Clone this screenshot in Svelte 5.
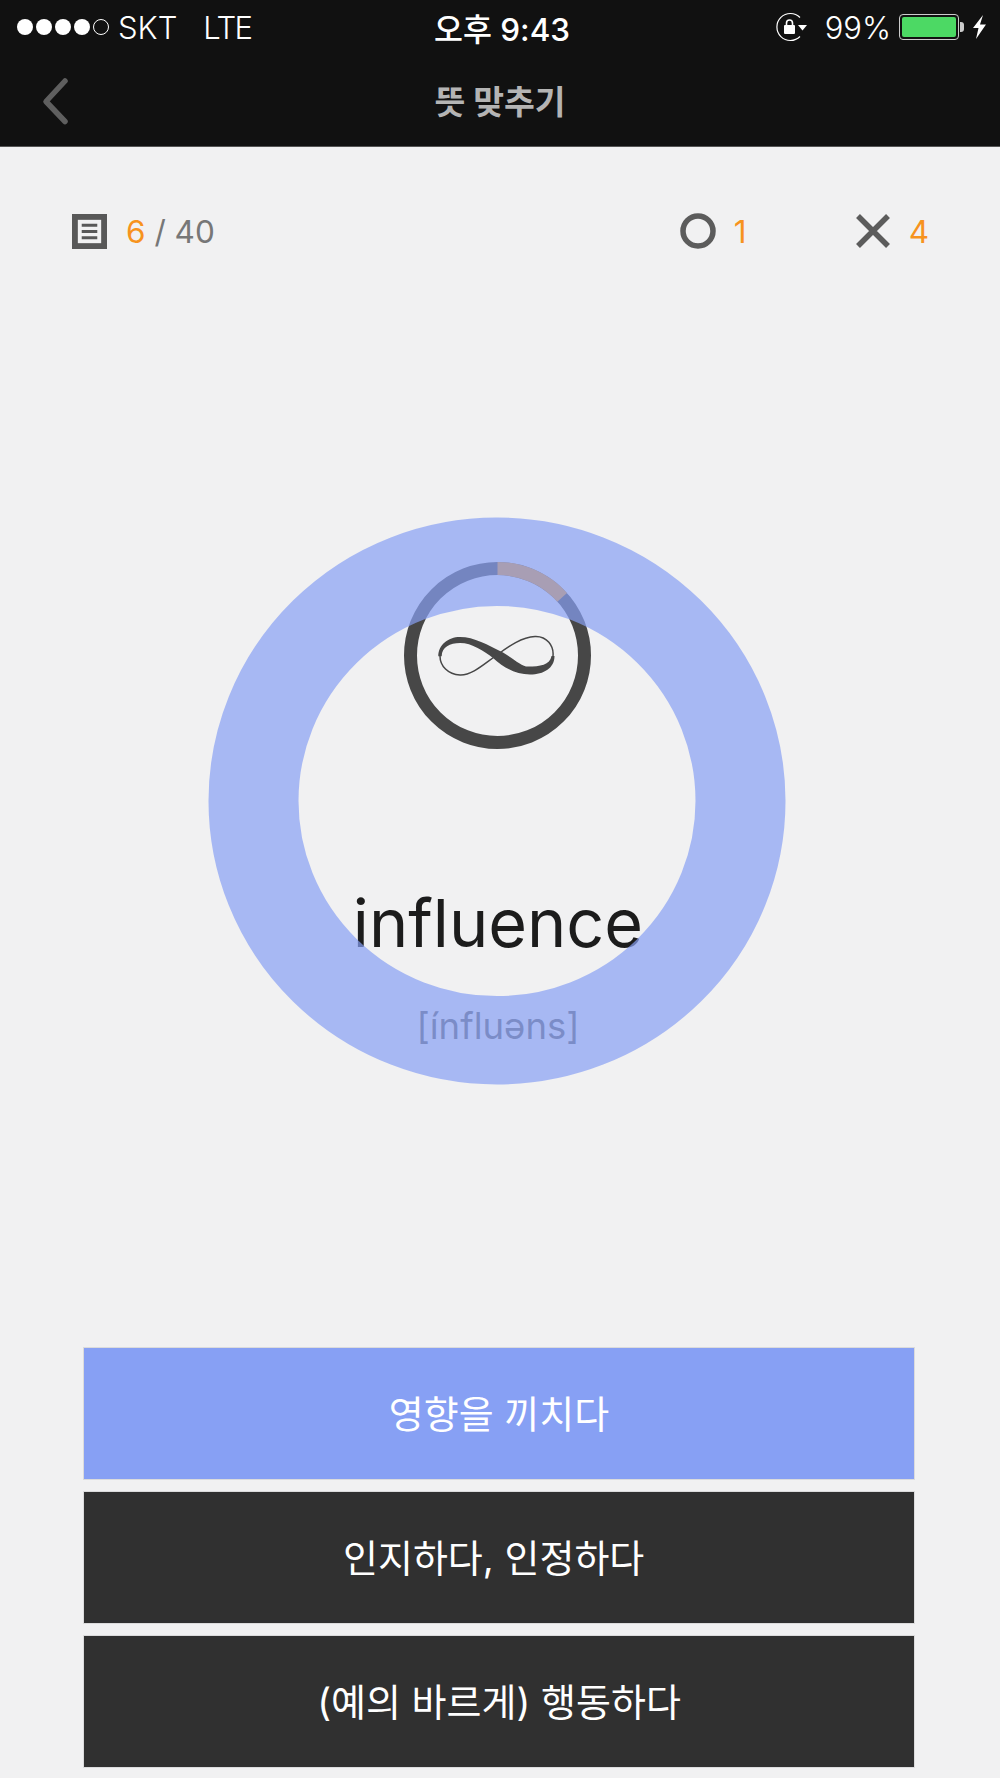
<script>
  const answers = [
    { label: '영향을 끼치다', correct: true },
    { label: '인지하다, 인정하다\u00a0', correct: false },
    { label: '(예의 바르게) 행동하다', correct: false }
  ];
  // orange part of the timer ring, from 12 o'clock
  const endAngle = (48 * Math.PI) / 180;
  const arcEnd = `${93.5 + 87 * Math.sin(endAngle)} ${93.5 - 87 * Math.cos(endAngle)}`;
</script>

<div class="screen">
  <header>
    <div class="status">
      <div class="carrier">
        <span class="dots">
          {#each [1, 2, 3, 4] as d}<i class="dot"></i>{/each}<i class="dot empty"></i>
        </span>
        <span class="name">SKT</span>
        <span class="name lte">LTE</span>
      </div>
      <div class="clock">오후 9:43</div>
      <div class="right">
        <svg class="lock" width="32" height="30" viewBox="0 0 32 30">
          <path d="M25 5.500A13.500 13.500 0 1 0 25 24.500" fill="none" stroke="#fff" stroke-width="1.200" />
          <path d="M23 13h9l-4.500 5.500z" fill="#fff" />
          <rect x="9" y="13" width="11" height="9" rx="1" fill="#fff" />
          <path d="M11.500 13V11a3 3 0 0 1 6 0V13" fill="none" stroke="#fff" stroke-width="1.600" />
        </svg>
        <span class="pct">99%</span>
        <span class="battery"><span class="fill"></span></span>
        <span class="nub"></span>
        <svg class="bolt" width="15" height="26" viewBox="0 0 15 26">
          <path d="M11 1 1 14h5.500L4 25 14 10.500H8z" fill="#fff" />
        </svg>
      </div>
    </div>
    <div class="nav">
      <svg class="back" width="30" height="50" viewBox="0 0 30 50">
        <path d="M24 4 5 24.500l19 20" fill="none" stroke="#5f5f5f" stroke-width="5.500" stroke-linecap="round" stroke-linejoin="round" />
      </svg>
      <h1>뜻 맞추기</h1>
    </div>
  </header>

  <div class="stats">
    <div class="progress">
      <svg width="35" height="35" viewBox="0 0 36 36">
        <rect width="36" height="36" fill="#585858" />
        <rect x="6" y="6" width="24" height="24" fill="#f1f1f2" />
        <path d="M10 11.500h16M10 18h16M10 24.500h16" stroke="#585858" stroke-width="3" />
      </svg>
      <span class="num"><b>6</b> / 40</span>
    </div>
    <div class="scores">
      <div class="score">
        <svg width="36" height="36" viewBox="0 0 36 36">
          <circle cx="18" cy="18" r="15" fill="none" stroke="#5c5c5c" stroke-width="5.500" />
        </svg>
        <b>1</b>
      </div>
      <div class="score">
        <svg width="36" height="36" viewBox="0 0 36 36">
          <path d="M3 3l30 30M33 3 3 33" fill="none" stroke="#5c5c5c" stroke-width="5.500" />
        </svg>
        <b>4</b>
      </div>
    </div>
  </div>

  <main>
    <div class="card">
      <svg class="timer" width="187" height="187" viewBox="0 0 187 187">
        <circle cx="93.500" cy="93.500" r="87" fill="none" stroke="#474747" stroke-width="13" />
        <path d="M93.500 6.500A87 87 0 0 1 {arcEnd}" fill="none" stroke="#f39a1e" stroke-width="13" />
        <path
          d="M36 94C36 104 44 112.500 56 113 68 113.500 80 102 93 93 105 84 118 75 131 74.500 143 74 150 84 149 94"
          fill="none"
          stroke="#474747"
          stroke-width="1.500"
        />
        <path
          d="M34.300 94.300C34.300 83 44 75 56 75 70 75 84 83 99 90.500 110 97 118 104.500 124 104.500 136 104.500 146 103 147.500 94L150.500 94C150.500 106 140 112.500 126 112.500 112 112.500 100 106 89 96 80 89 68 81 56 81 46 81 37.700 85 37.700 94.300Z"
          fill="#474747"
        />
      </svg>
      <div class="word">influence</div>
      <div class="phonetic">[ínfluəns]</div>
      <svg class="ring" width="580" height="570" viewBox="0 0 580 580" preserveAspectRatio="none">
        <circle cx="290" cy="290" r="243.500" fill="none" stroke="#87a0f4" stroke-opacity="0.7" stroke-width="90" />
      </svg>
    </div>
  </main>

  <div class="answers">
    {#each answers as a}
      <button class:correct={a.correct}>{a.label}</button>
    {/each}
  </div>
</div>

<style>
  :global(body) {
    margin: 0;
    background: #f1f1f2;
  }

  .screen {
    width: 1000px;
    height: 1778px;
    overflow: hidden;
    display: flex;
    flex-direction: column;
    font-family: Inter, "Noto Sans CJK KR", sans-serif;
    background: #f1f1f2;
  }

  header {
    height: 146px;
    background: #111;
    color: #fff;
    border-bottom: 1px solid #555;
    box-sizing: content-box;
  }

  .status {
    height: 54px;
    display: grid;
    grid-template-columns: 1fr auto 1fr;
    align-items: center;
    padding: 0 13px 0 17px;
    font-size: 31px;
  }

  .carrier {
    display: flex;
    align-items: center;
  }

  .dots {
    display: flex;
    gap: 3px;
    margin-right: 9px;
  }

  .dot {
    width: 16px;
    height: 16px;
    border-radius: 50%;
    background: #fff;
    box-sizing: border-box;
  }

  .dot.empty {
    background: none;
    border: 1px solid #fff;
  }

  .name {
    font-weight: 300;
  }

  .lte {
    margin-left: 26px;
    letter-spacing: -1.500px;
  }

  .clock {
    font-weight: 500;
    font-size: 31.500px;
    text-align: center;
  }

  .right {
    display: flex;
    align-items: center;
    justify-content: flex-end;
  }

  .pct {
    font-weight: 300;
    margin: 0 8px 0 18px;
  }

  .battery {
    width: 60px;
    height: 26px;
    border: 1px solid #ccc;
    border-radius: 4px;
    padding: 2px;
    box-sizing: border-box;
    display: block;
  }

  .fill {
    display: block;
    height: 100%;
    background: #4cd964;
    border-radius: 2px;
  }

  .nub {
    width: 4px;
    height: 10px;
    margin-left: 1px;
    background: #ccc;
    border-radius: 0 3px 3px 0;
  }

  .bolt {
    margin-left: 8px;
  }

  .nav {
    height: 92px;
    display: flex;
    align-items: center;
    justify-content: center;
    position: relative;
  }

  .back {
    position: absolute;
    left: 41px;
    top: 23px;
  }

  h1 {
    margin: 0;
    font-size: 33.500px;
    font-weight: 700;
    color: #b4b4b4;
    transform: translateY(-1px);
  }

  .stats {
    display: flex;
    justify-content: space-between;
    padding: 66px 71px 0 72px;
    height: 36px;
    align-items: center;
  }

  .progress,
  .score {
    display: flex;
    align-items: center;
    gap: 19px;
    font-size: 31.500px;
    color: #777;
  }

  .score {
    gap: 18px;
  }

  .progress b,
  .score b {
    font-weight: 400;
    color: #f7931e;
  }

  .scores {
    display: flex;
    gap: 108px;
  }

  main {
    flex: 1;
  }

  .card {
    position: relative;
    width: 580px;
    height: 570px;
    margin: 267px 0 0 207px;
    display: flex;
    flex-direction: column;
    align-items: center;
  }

  .timer {
    margin-top: 46px;
    flex: none;
  }

  .word {
    margin-top: 131px;
    font-size: 66.500px;
    line-height: 86px;
    color: #1c1c1c;
    transform: translateX(1px);
  }

  .phonetic {
    margin-top: 38px;
    font-size: 36.500px;
    line-height: 44px;
    color: #5f5f5f;
    transform: translateX(1px);
  }

  .ring {
    position: absolute;
    left: 0;
    top: 0;
  }

  .answers {
    display: flex;
    flex-direction: column;
    gap: 13px;
    padding: 0 86px 11px 84px;
  }

  button {
    height: 131px;
    border: 0;
    padding: 0 0 4px;
    background: #303030;
    color: #fff;
    font: inherit;
    font-size: 38px;
    box-shadow: 0 0 0 1px rgba(170, 170, 170, 0.3);
  }

  button.correct {
    background: #87a0f4;
  }
</style>
